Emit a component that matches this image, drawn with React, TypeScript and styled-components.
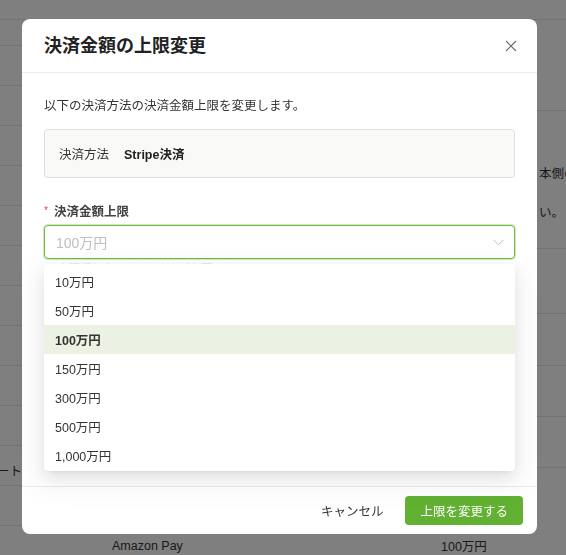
import React from 'react';
import styled, { createGlobalStyle } from 'styled-components';

const GlobalStyle = createGlobalStyle`
  html, body {
    margin: 0;
    padding: 0;
    overflow: hidden;
  }
  body {
    font-family: "Liberation Sans", "Noto Sans CJK JP", sans-serif;
    color: #333;
    -webkit-font-smoothing: antialiased;
  }
  * {
    box-sizing: border-box;
  }
`;

/* ---------- page behind the modal ---------- */

const Page = styled.div`
  width: 566px;
  height: 555px;
  background: #fff;
  display: flex;
  flex-direction: column;
  overflow: hidden;
`;

const TopBar = styled.div`
  height: 20px;
  flex-shrink: 0;
  border-bottom: 1px solid #e6e6e6;
`;

const PageBody = styled.div`
  flex: 1;
  display: flex;
`;

const TableCol = styled.div`
  flex: 1;
  display: flex;
  flex-direction: column;
  padding-top: 25px;
`;

const TableRow = styled.div`
  height: 40px;
  flex-shrink: 0;
  display: grid;
  grid-template-columns: 112px 329px 1fr;
  align-items: center;
  border-top: 1px solid #e6e6e6;
  font-size: 12.5px;
  color: #333;
`;

const EdgeText = styled.span`
  display: block;
  margin-left: -3px;
  margin-top: 10px;
`;

const SideCol = styled.div`
  width: 29px;
  display: flex;
  flex-direction: column;
  font-size: 12.5px;
  color: #333;
  white-space: nowrap;
`;

const SideLine = styled.div<{ h: number; line?: boolean }>`
  height: ${({ h }) => h}px;
  flex-shrink: 0;
  display: flex;
  align-items: center;
  margin-left: -6px;
  padding-left: 8px;
  border-top: ${({ line }) => (line ? '1px solid #e6e6e6' : 'none')};
`;

const SideNote = styled.div`
  display: flex;
  flex-direction: column;
  gap: 20px;
  padding-top: 24px;
`;

/* ---------- modal ---------- */

const Overlay = styled.div`
  position: fixed;
  inset: 0;
  background: rgba(0, 0, 0, 0.5);
  padding: 19px 0 0 22px;
`;

const Modal = styled.div`
  width: 515px;
  background: #fff;
  border-radius: 8px;
  display: flex;
  flex-direction: column;
`;

const Header = styled.div`
  height: 54px;
  padding: 0 19px 0 22px;
  display: flex;
  align-items: center;
  justify-content: space-between;
  border-bottom: 1px solid #ebebeb;
`;

const Title = styled.h2`
  margin: 0;
  font-size: 18px;
  font-weight: 700;
  color: #222;
  line-height: 24px;
`;

const CloseButton = styled.button`
  width: 14px;
  height: 14px;
  padding: 0;
  border: none;
  background: none;
  display: flex;
  align-items: center;
  justify-content: center;
  cursor: pointer;
`;

const Body = styled.div`
  position: relative;
  min-height: 413px;
  padding: 23px 22px 0;
  display: flex;
  flex-direction: column;
`;

const Description = styled.p`
  margin: 0 0 13px;
  font-size: 12.5px;
  line-height: 20px;
  color: #333;
`;

const InfoBox = styled.div`
  height: 49px;
  padding: 0 14px;
  display: flex;
  align-items: center;
  gap: 15px;
  background: #f9f9f7;
  border: 1px solid #dedede;
  border-radius: 4px;
  font-size: 12.5px;
`;

const InfoKey = styled.span`
  color: #333;
`;

const InfoValue = styled.span`
  font-weight: 700;
  color: #222;
`;

const Field = styled.div`
  margin-top: 22px;
  display: flex;
  flex-direction: column;
`;

const Label = styled.label`
  height: 20px;
  display: flex;
  align-items: center;
  gap: 3px;
  font-size: 12.5px;
  font-weight: 700;
  color: #444;
`;

const Required = styled.span`
  color: #e04a4f;
  font-size: 10px;
  font-weight: 400;
  width: 7px;
`;

const SelectWrap = styled.div`
  position: relative;
  margin-top: 5px;
`;

const SelectBox = styled.div`
  height: 34px;
  padding: 0 10px 0 11px;
  display: flex;
  align-items: center;
  justify-content: space-between;
  border: 1px solid #74bd41;
  box-shadow: 0 0 0 1px rgba(116, 189, 65, 0.35);
  border-radius: 4px;
  background: #fff;
`;

const Placeholder = styled.span`
  font-size: 14px;
  color: #bfbfbf;
`;

const Hint = styled.div`
  margin-top: 3px;
  font-size: 11px;
  line-height: 14px;
  color: #e2e2e2;
`;

const Dropdown = styled.ul`
  position: absolute;
  top: calc(100% + 5px);
  left: 0;
  right: 0;
  margin: 0;
  padding: 3px 0 1px;
  list-style: none;
  background: #fff;
  border-radius: 4px;
  box-shadow: 0 3px 6px -4px rgba(0, 0, 0, 0.12), 0 6px 16px 0 rgba(0, 0, 0, 0.08),
    0 9px 28px 8px rgba(0, 0, 0, 0.05);
  z-index: 2;
`;

const Option = styled.li<{ active?: boolean }>`
  height: 29px;
  padding: 0 11px;
  display: flex;
  align-items: center;
  font-size: 12.5px;
  color: #333;
  font-weight: ${({ active }) => (active ? 700 : 400)};
  background: ${({ active }) => (active ? '#ebf1e3' : 'transparent')};
`;

const Footer = styled.div`
  padding: 9px 14px 9px;
  display: flex;
  justify-content: flex-end;
  align-items: center;
  gap: 11px;
  border-top: 1px solid #ebebeb;
`;

const Button = styled.button<{ primary?: boolean }>`
  height: 29px;
  padding: 0 ${({ primary }) => (primary ? 15 : 11)}px;
  border: none;
  border-radius: 4px;
  font-family: inherit;
  font-size: 12.5px;
  cursor: pointer;
  color: ${({ primary }) => (primary ? '#fff' : '#333')};
  background: ${({ primary }) => (primary ? '#62b133' : 'transparent')};
`;

const options = ['10万円', '50万円', '100万円', '150万円', '300万円', '500万円', '1,000万円'];

const rows = [
  ['', ''], ['', ''], ['', ''], ['', ''], ['', ''], ['', ''], ['', ''],
  ['', ''], ['', ''], ['', ''], ['', ''], ['', ''],
  ['Amazon Pay', '100万円'],
];

const CloseIcon = () => (
  <svg width="12" height="12" viewBox="0 0 12 12">
    <path d="M1 1 L11 11 M11 1 L1 11" stroke="#6a6a6a" strokeWidth="1.1" fill="none" />
  </svg>
);

const ChevronIcon = () => (
  <svg width="11" height="7" viewBox="0 0 11 7">
    <path d="M0.5 0.8 L5.5 5.8 L10.5 0.8" stroke="#bbb" strokeWidth="1" fill="none" />
  </svg>
);

const App: React.FC = () => {
  return (
    <>
      <GlobalStyle />
      <Page>
        <TopBar />
        <PageBody>
          <TableCol>
            {rows.map(([name, amount], i) => (
              <TableRow key={i}>
                <span>{i === 10 ? <EdgeText>ート</EdgeText> : null}</span>
                <span>{name}</span>
                <span>{amount}</span>
              </TableRow>
            ))}
          </TableCol>
          <SideCol>
            <SideLine h={90} />
            <SideLine h={138} line>
              <SideNote>
                <span>本側の設定</span>
                <span>い。</span>
              </SideNote>
            </SideLine>
            <SideLine h={65} line />
            <SideLine h={52} line />
            <SideLine h={51} line />
            <SideLine h={51} line />
            <SideLine h={62} line />
          </SideCol>
        </PageBody>
      </Page>

      <Overlay>
        <Modal>
          <Header>
            <Title>決済金額の上限変更</Title>
            <CloseButton aria-label="閉じる">
              <CloseIcon />
            </CloseButton>
          </Header>

          <Body>
            <Description>以下の決済方法の決済金額上限を変更します。</Description>
            <InfoBox>
              <InfoKey>決済方法</InfoKey>
              <InfoValue>Stripe決済</InfoValue>
            </InfoBox>

            <Field>
              <Label>
                <Required>*</Required>
                決済金額上限
              </Label>
              <SelectWrap>
                <SelectBox>
                  <Placeholder>100万円</Placeholder>
                  <ChevronIcon />
                </SelectBox>
                <Dropdown>
                  {options.map((o) => (
                    <Option key={o} active={o === '100万円'}>
                      {o}
                    </Option>
                  ))}
                </Dropdown>
              </SelectWrap>
              <Hint>※ 上限額を変更すると審査が必要です</Hint>
            </Field>
          </Body>

          <Footer>
            <Button>キャンセル</Button>
            <Button primary>上限を変更する</Button>
          </Footer>
        </Modal>
      </Overlay>
    </>
  );
};

export default App;
